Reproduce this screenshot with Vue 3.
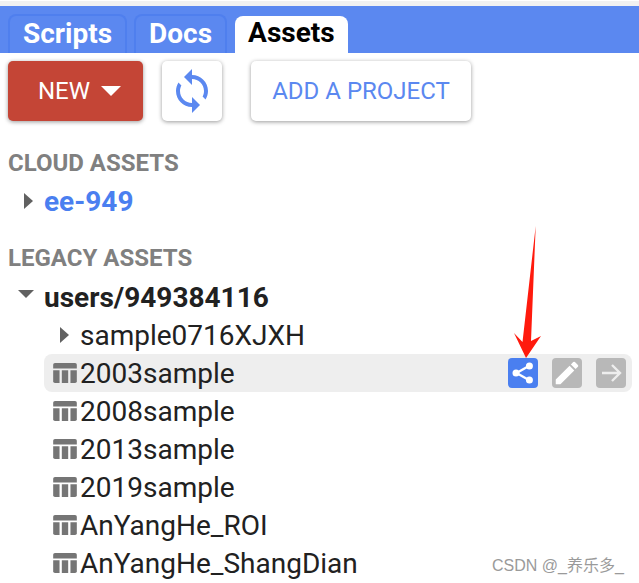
<template>
  <div class="panel">
    <div class="tabbar">
      <div v-for="t in tabs" :key="t" class="tab" :class="{ active: t === 'Assets' }">{{ t }}</div>
    </div>

    <div class="toolbar">
      <button class="btn-new">NEW <span class="caret"></span></button>
      <button class="btn-refresh">
        <svg width="48" height="48" viewBox="0 0 24 24" fill="#5b88f0">
          <path d="M12 4V1L8 5l4 4V6c3.31 0 6 2.69 6 6 0 1.01-.25 1.97-.7 2.8l1.46 1.46C19.54 15.03 20 13.57 20 12c0-4.42-3.58-8-8-8zm0 14c-3.31 0-6-2.69-6-6 0-1.01.25-1.97.7-2.8L5.24 7.74C4.46 8.97 4 10.43 4 12c0 4.42 3.58 8 8 8v3l4-4-4-4v3z" />
        </svg>
      </button>
      <button class="btn-project">ADD A PROJECT</button>
    </div>

    <div class="heading">CLOUD ASSETS</div>
    <div class="row cloud">
      <span class="arrow-right"></span>
      <span class="cloud-name">ee-949</span>
    </div>

    <div class="heading legacy">LEGACY ASSETS</div>
    <div class="row user">
      <span class="arrow-down"></span>
      <span class="user-name">users/949384116</span>
    </div>
    <div class="row folder">
      <span class="arrow-right"></span>
      <span class="name">sample0716XJXH</span>
    </div>

    <div
      v-for="(item, i) in items"
      :key="item"
      class="row asset"
      :class="{ hovered: i === 0 }"
    >
      <svg class="table-icon" width="24" height="20" viewBox="0 0 26 22" fill="#757575">
        <path d="M2 0h22a2 2 0 0 1 2 2v4H0V2a2 2 0 0 1 2-2z" />
        <path d="M0 8h7v14H2a2 2 0 0 1-2-2z" />
        <rect x="9.5" y="8" width="7" height="14" />
        <path d="M19 8h7v12a2 2 0 0 1-2 2h-5z" />
      </svg>
      <span class="name">{{ item }}</span>
      <div v-if="i === 0" class="actions">
        <span class="action share">
          <svg width="28" height="28" viewBox="0 0 24 24" fill="none" stroke="#fff">
            <path d="M17 6 6.500 12 17 18" stroke-width="2" />
            <circle cx="17.500" cy="6" r="3" fill="#fff" stroke="none" />
            <circle cx="6" cy="12" r="3" fill="#fff" stroke="none" />
            <circle cx="17.500" cy="18" r="3" fill="#fff" stroke="none" />
          </svg>
        </span>
        <span class="action">
          <svg width="30" height="30" viewBox="0 0 24 24" fill="#fff">
            <path d="M3 17.250V21h3.750L17.810 9.940l-3.750-3.750L3 17.250zM20.710 7.040a1 1 0 0 0 0-1.410l-2.340-2.340a1 1 0 0 0-1.410 0l-1.830 1.830 3.750 3.750 1.830-1.830z" />
          </svg>
        </span>
        <span class="action">
          <svg width="24" height="24" viewBox="0 0 24 24" fill="none" stroke="#eee" stroke-width="2.400">
            <path d="M3 12h18M13 4l8 8-8 8" />
          </svg>
        </span>
      </div>
    </div>

    <svg class="red-arrow" width="28" height="132" viewBox="0 0 28 132">
      <path d="M21.700 0 17 115 27 110 12 132 0 107 8.500 116Z" fill="#ff1a0d" />
    </svg>

    <div class="watermark">CSDN @_养乐多_</div>
  </div>
</template>

<script setup>
const tabs = ['Scripts', 'Docs', 'Assets']
const items = [
  '2003sample',
  '2008sample',
  '2013sample',
  '2019sample',
  'AnYangHe_ROI',
  'AnYangHe_ShangDian',
]
</script>

<style>
html,
body {
  margin: 0;
  background: #fff;
}
</style>

<style scoped>
.panel {
  position: relative;
  width: 639px;
  height: 583px;
  overflow: hidden;
  background: #fff;
  font-family: Roboto, "Liberation Sans", sans-serif;
  color: #212121;
}

.tabbar {
  display: flex;
  align-items: flex-end;
  gap: 7px;
  height: 47px;
  margin-top: 6px;
  padding-left: 8px;
  background: #5b88f0;
  box-sizing: border-box;
  box-shadow: 0 -5px 0 #f1f1f1;
}

.tab {
  height: 39px;
  padding: 0 13px;
  box-sizing: border-box;
  border: 2px solid #4f7fee;
  border-bottom: none;
  border-radius: 8px 8px 0 0;
  color: #fff;
  font-size: 28px;
  font-weight: 700;
  line-height: 36px;
}

.tab.active {
  height: 37px;
  padding: 0 13px;
  margin-left: 1px;
  border: none;
  background: #fff;
  color: #000;
  line-height: 33px;
}

.toolbar {
  display: flex;
  gap: 19px;
  padding: 8px 0 0 8px;
  height: 60px;
}

.toolbar button {
  height: 60px;
  border: none;
  border-radius: 5px;
  font-family: inherit;
  font-size: 24px;
  background: #fff;
  box-shadow: 0 1px 4px rgba(0, 0, 0, 0.4);
  padding: 0;
}

.toolbar .btn-new {
  display: flex;
  align-items: center;
  justify-content: center;
  gap: 11px;
  width: 135px;
  padding-left: 8px;
  box-sizing: border-box;
  background: #c44536;
  color: #fff;
}

.caret {
  width: 0;
  height: 0;
  border-left: 10px solid transparent;
  border-right: 10px solid transparent;
  border-top: 10px solid #fff;
}

.btn-refresh {
  display: flex;
  align-items: center;
  justify-content: center;
  width: 60px;
}

.btn-project {
  width: 220px;
  margin-left: 10px;
  color: #5b88f0;
}

.heading {
  margin: 27px 0 0 8px;
  height: 30px;
  line-height: 30px;
  font-size: 24px;
  font-weight: 700;
  color: #808080;
}

.heading.legacy {
  margin-top: 23px;
}

.row {
  display: flex;
  align-items: center;
  height: 38px;
  box-sizing: border-box;
}

.cloud {
  margin-top: 4px;
  padding-left: 24px;
}

.cloud-name {
  margin-left: 11px;
  color: #4a7ff0;
  font-size: 28px;
  font-weight: 700;
}

.user {
  margin-top: 5px;
  padding-left: 18px;
}

.user-name {
  margin-left: 10px;
  font-size: 28px;
  font-weight: 700;
}

.folder {
  padding-left: 60px;
}

.folder .name {
  margin-left: 11px;
}

.name {
  font-size: 28px;
  color: #212121;
}

.arrow-right {
  width: 0;
  height: 0;
  border-top: 8px solid transparent;
  border-bottom: 8px solid transparent;
  border-left: 9px solid #616161;
}

.arrow-down {
  width: 0;
  height: 0;
  margin-top: -6px;
  border-left: 8px solid transparent;
  border-right: 8px solid transparent;
  border-top: 8px solid #616161;
}

.asset {
  margin-left: 44px;
  width: 588px;
  padding-left: 9px;
  border-radius: 8px;
}

.asset.hovered {
  background: #eeeeee;
}

.table-icon {
  flex: none;
  margin-right: 3px;
}

.actions {
  display: flex;
  gap: 14px;
  margin-left: auto;
  margin-right: 6px;
}

.action {
  display: flex;
  align-items: center;
  justify-content: center;
  width: 30px;
  height: 30px;
  border-radius: 4px;
  background: #b8b8b8;
}

.action.share {
  background: #4a7ff0;
}

.red-arrow {
  position: absolute;
  left: 514px;
  top: 226px;
}

.watermark {
  position: absolute;
  left: 492px;
  top: 552px;
  font-family: "Liberation Sans", "Noto Sans CJK SC", sans-serif;
  font-size: 16px;
  color: #9a9a9a;
}
</style>
